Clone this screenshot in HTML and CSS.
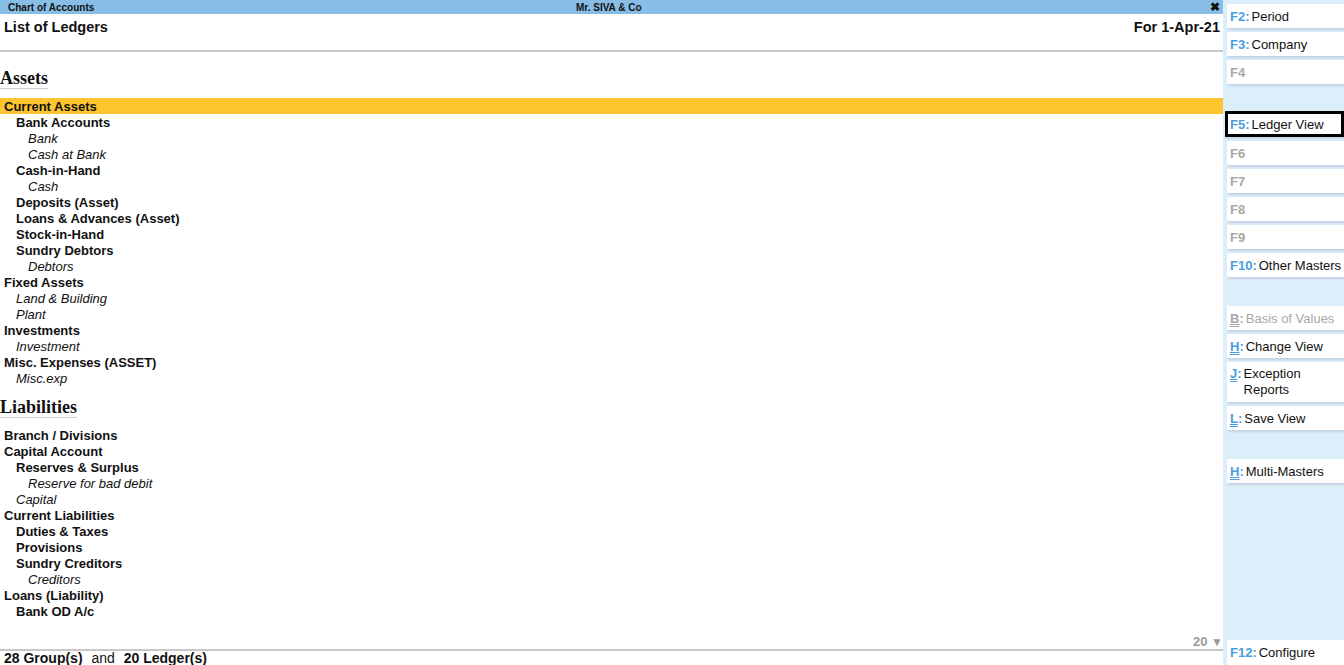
FILE: index.html
```html
<!DOCTYPE html>
<html lang="en">
<head>
    <meta charset="UTF-8">
    <title>Chart of Accounts</title>
    <link rel="stylesheet" href="styles.css">
</head>
<body>
    <div class="screen">
        <div class="main">
            <div class="titlebar">
                <span class="title-left">Chart of Accounts</span>
                <span class="title-center">Mr. SIVA &amp; Co</span>
                <span class="title-close">&#x2716;</span>
            </div>

            <div class="report-head">
                <span>List of Ledgers</span>
                <span>For 1-Apr-21</span>
            </div>

            <div class="report-body">
                <h2 class="section">Assets</h2>
                <div class="list assets">
                    <div class="row grp lvl0 active">Current Assets</div>
                    <div class="row grp lvl1">Bank Accounts</div>
                    <div class="row led lvl2">Bank</div>
                    <div class="row led lvl2">Cash at Bank</div>
                    <div class="row grp lvl1">Cash-in-Hand</div>
                    <div class="row led lvl2">Cash</div>
                    <div class="row grp lvl1">Deposits (Asset)</div>
                    <div class="row grp lvl1">Loans &amp; Advances (Asset)</div>
                    <div class="row grp lvl1">Stock-in-Hand</div>
                    <div class="row grp lvl1">Sundry Debtors</div>
                    <div class="row led lvl2">Debtors</div>
                    <div class="row grp lvl0">Fixed Assets</div>
                    <div class="row led lvl1">Land &amp; Building</div>
                    <div class="row led lvl1">Plant</div>
                    <div class="row grp lvl0">Investments</div>
                    <div class="row led lvl1">Investment</div>
                    <div class="row grp lvl0">Misc. Expenses (ASSET)</div>
                    <div class="row led lvl1">Misc.exp</div>
                </div>

                <h2 class="section">Liabilities</h2>
                <div class="list">
                    <div class="row grp lvl0">Branch / Divisions</div>
                    <div class="row grp lvl0">Capital Account</div>
                    <div class="row grp lvl1">Reserves &amp; Surplus</div>
                    <div class="row led lvl2">Reserve for bad debit</div>
                    <div class="row led lvl1">Capital</div>
                    <div class="row grp lvl0">Current Liabilities</div>
                    <div class="row grp lvl1">Duties &amp; Taxes</div>
                    <div class="row grp lvl1">Provisions</div>
                    <div class="row grp lvl1">Sundry Creditors</div>
                    <div class="row led lvl2">Creditors</div>
                    <div class="row grp lvl0">Loans (Liability)</div>
                    <div class="row grp lvl1">Bank OD A/c</div>
                </div>

                <div class="more">20 <span class="arrow">&#9660;</span></div>
            </div>

            <div class="report-foot">
                <b>28 Group(s)</b> <span class="and">and</span> <b>20 Ledger(s)</b>
            </div>
        </div>

        <div class="side">
            <div class="btn"><span class="key">F2:</span> Period</div>
            <div class="btn"><span class="key">F3:</span> Company</div>
            <div class="btn off"><span class="key">F4</span></div>
            <div class="gap"></div>
            <div class="btn selected"><span class="key">F5:</span> Ledger View</div>
            <div class="btn off"><span class="key">F6</span></div>
            <div class="btn off"><span class="key">F7</span></div>
            <div class="btn off"><span class="key">F8</span></div>
            <div class="btn off"><span class="key">F9</span></div>
            <div class="btn"><span class="key">F10:</span> Other Masters</div>
            <div class="gap wide"></div>
            <div class="btn off"><span class="key"><u>B</u>:</span> Basis of Values</div>
            <div class="btn"><span class="key"><u>H</u>:</span> Change View</div>
            <div class="btn tall"><span class="key"><u>J</u>:</span> <span>Exception<br>Reports</span></div>
            <div class="btn"><span class="key"><u>L</u>:</span> Save View</div>
            <div class="gap wide"></div>
            <div class="btn"><span class="key"><u>H</u>:</span> Multi-Masters</div>
            <div class="spacer"></div>
            <div class="btn last"><span class="key">F12:</span> Configure</div>
        </div>
    </div>
</body>
</html>
```

FILE: styles.css
```css
* {
    margin: 0;
    padding: 0;
    box-sizing: border-box;
}

body {
    font-family: "Liberation Sans", Arial, sans-serif;
    color: #111;
    background-color: #ffffff;
    width: 1344px;
    height: 665px;
    overflow: hidden;
}

.screen {
    display: flex;
    height: 665px;
}

/* Zona principal */
.main {
    width: 1223px;
    display: flex;
    flex-direction: column;
    height: 665px;
}

.titlebar {
    height: 14px;
    background-color: #88bde6;
    display: flex;
    align-items: center;
    font-size: 10px;
    font-weight: bold;
    position: relative;
}

.title-left {
    padding-left: 8px;
}

.title-center {
    position: absolute;
    left: 576px;
}

.title-close {
    margin-left: auto;
    margin-right: 3px;
    font-size: 12px;
}

.report-head {
    display: flex;
    justify-content: space-between;
    padding: 5px 3px 0 4px;
    height: 38px;
    font-size: 14.5px;
    font-weight: bold;
    border-bottom: 2px solid #c8c8c8;
}

.report-body {
    flex: 1;
    padding-top: 16px;
    position: relative;
}

.section {
    font-family: "Liberation Serif", "Times New Roman", serif;
    font-size: 18px;
    font-weight: bold;
    height: 21px;
    line-height: 20px;
    display: inline-block;
    border-bottom: 1px solid #cfcfcf;
    margin-bottom: 9px;
}

.list.assets {
    margin-bottom: 11px;
}

.row {
    height: 16px;
    line-height: 18px;
    font-size: 13px;
    white-space: nowrap;
}

.row.grp {
    font-weight: bold;
}

.row.led {
    font-style: italic;
}

.lvl0 { padding-left: 4px; }
.lvl1 { padding-left: 16px; }
.lvl2 { padding-left: 28px; }

.row.active {
    background-color: #fec52e;
}

.more {
    position: absolute;
    right: 0;
    bottom: 0;
    font-size: 13px;
    font-weight: bold;
    color: #9a9a9a;
}

.more .arrow {
    font-size: 12px;
}

.report-foot {
    border-top: 2px solid #c8c8c8;
    height: 16px;
    padding-left: 4px;
    font-size: 14px;
    line-height: 14px;
    white-space: nowrap;
}

.report-foot .and {
    margin: 0 5px;
}

/* Barra lateral de botoes */
.side {
    width: 121px;
    background-color: #ddeefb;
    display: flex;
    flex-direction: column;
    padding-top: 4px;
    padding-left: 4px;
}

.btn {
    height: 24px;
    margin-bottom: 4px;
    background-color: #ffffff;
    box-shadow: 1px 2px 2px #c3d3e2;
    font-size: 13px;
    padding: 5px 0 0 3px;
    display: flex;
    white-space: nowrap;
}

.btn .key {
    color: #4a9ee0;
    font-weight: bold;
    margin-right: 2px;
}

.btn .key u {
    text-decoration-style: double;
}

.btn.off {
    color: #a8a8a8;
}

.btn.off .key {
    color: #a8a8a8;
}

.btn.tall {
    height: 40px;
    line-height: 16px;
    padding-top: 4px;
}

.btn.selected {
    border: 3px solid #000;
    margin-left: -2px;
    margin-top: -1px;
    height: 26px;
    padding: 3px 0 0 2px;
    margin-bottom: 4px;
}

.gap {
    height: 24px;
}

.gap.wide {
    height: 25px;
}

.spacer {
    flex: 1;
}

.btn.last {
    margin-bottom: 0;
    height: 25px;
}
```
